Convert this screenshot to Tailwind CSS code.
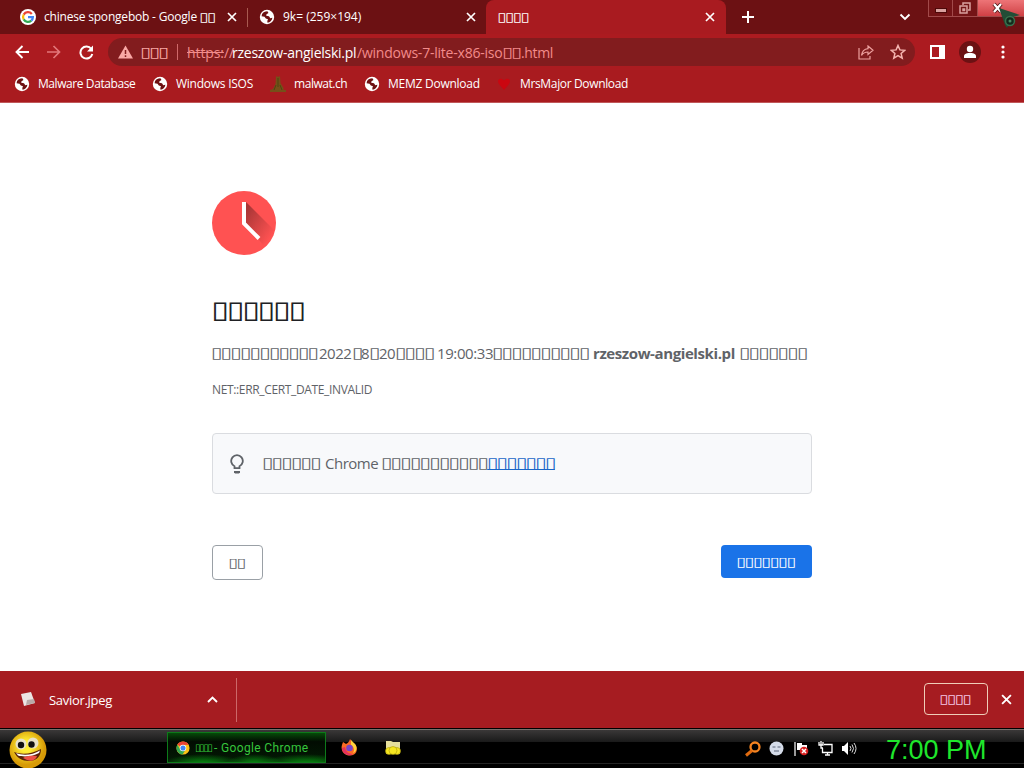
<!DOCTYPE html>
<html lang="zh">

<head>
    <meta charset="UTF-8">
    <meta name="viewport" content="width=device-width, initial-scale=1.0">
    <title>▯▯▯▯ - Google Chrome</title>
    <script src="https://cdn.jsdelivr.net/npm/@tailwindcss/browser@4"></script>
    <style>
        /* missing-glyph boxes, widened */
        .box {
            font-family: 'DejaVu Sans', sans-serif;
            display: inline-block;
            white-space: nowrap;
            letter-spacing: -0.08em;
            transform: translateX(-0.8px) scaleX(1.37);
            transform-origin: left;
            text-decoration-skip-ink: none;
        }
    </style>
</head>

<body class="w-[1024px] h-[768px] overflow-hidden flex flex-col relative bg-white whitespace-nowrap font-['Open_Sans','Noto_Sans',sans-serif]">
    <svg class="hidden">
        <symbol id="globe" viewBox="0 0 16 16">
            <circle cx="8" cy="8" r="7.2" fill="#fff" />
            <path d="M3 5.2C4.2 3 6 2.3 8.400 2.300L9.500 4 7.500 5.200 7.200 6.800 10 7.300 11.300 9.300 13.400 8.700C13 11.500 11 13.400 8.500 13.800L8.300 12 9 10.300 6.800 9.500 5.500 7.700 2.600 7.300Z" fill="#6d1012" />
            <path d="M9.600 2.600 11.500 3.400 13.200 6 10.500 5.800 9 5.300 10.300 4.300Z M2.500 9 4.600 9.500 6.400 11.500 6 13.300C4 12.500 2.800 11 2.500 9Z" fill="#fff" />
        </symbol>
        <symbol id="cross" viewBox="0 0 10 10">
            <path d="M1 1 9 9M9 1 1 9" stroke="#fff" stroke-width="1.700" />
        </symbol>
        <symbol id="chrome" viewBox="0 0 16 16">
            <circle cx="8" cy="8" r="7.500" fill="#fbc116" />
            <path d="M8 8 1.500 4.250A7.500 7.500 0 0 1 14.500 4.250L8 4.500Z" fill="#ea4335" />
            <path d="M1.500 4.250A7.500 7.500 0 0 0 7.500 15.500L11 9.800 5 9.800Z" fill="#34a853" />
            <circle cx="8" cy="8" r="3.700" fill="#fff" />
            <circle cx="8" cy="8" r="2.900" fill="#4285f4" />
        </symbol>
    </svg>

    <!-- tabs -->
    <header class="h-[34px] shrink-0 flex bg-[#6c1113] text-white text-[12px]">
        <div class="w-[247px] flex items-center pl-5">
            <svg class="w-4 h-4" viewBox="0 0 16 16">
                <circle cx="8" cy="8" r="8" fill="#fff" />
                <g fill="none" stroke-width="2.200">
                    <path d="M11.800 5A4.900 4.900 0 0 0 3.700 5.600" stroke="#ea4335" />
                    <path d="M3.700 5.600A4.900 4.900 0 0 0 3.700 10.400" stroke="#fbbc05" />
                    <path d="M3.700 10.400A4.900 4.900 0 0 0 11.300 11.600" stroke="#34a853" />
                    <path d="M11.300 11.600A4.900 4.900 0 0 0 12.900 8.100H8" stroke="#4285f4" />
                </g>
            </svg>
            <span class="ml-2 w-[156px] tracking-[-0.2px]">chinese spongebob - Google</span>
            <span class="box w-[16px]">▯▯</span>
            <svg class="w-2.5 h-2.5 ml-[11px]"><use href="#cross" /></svg>
        </div>
        <div class="w-px h-[19px] mt-2 bg-[#a85a50]"></div>
        <div class="w-[238px] flex items-center pl-[11px] pr-[10px]">
            <svg class="w-4 h-4"><use href="#globe" /></svg>
            <span class="ml-2">9k= (259×194)</span>
            <svg class="w-2.5 h-2.5 ml-auto"><use href="#cross" /></svg>
        </div>
        <div class="w-[240px] flex items-center px-[11px] bg-[#a91b20] rounded-t-lg">
            <span class="box ml-px">▯▯▯▯</span>
            <svg class="w-2.5 h-2.5 ml-auto"><use href="#cross" /></svg>
        </div>
        <svg class="w-3 h-3 mt-[11px] ml-4" viewBox="0 0 12 12"><path d="M6 0V12M0 6H12" stroke="#fff" stroke-width="2" /></svg>
        <svg class="w-3 h-2 mt-[13px] ml-[145px]" viewBox="0 0 12 8"><path d="M1.500 1.500 6 6 10.500 1.500" fill="none" stroke="#fff" stroke-width="1.900" /></svg>
        <div class="ml-[17px] w-[96px] h-[17px] flex border-l border-b border-[#a24a4a]">
            <div class="w-[24px] border-r border-[#a24a4a] flex justify-center items-center bg-[#741416]">
                <div class="w-[12px] h-[5px] mt-1 bg-[#d9a09e] border border-[#4d0909]"></div>
            </div>
            <div class="w-[25px] border-r border-[#a24a4a] flex justify-center items-center bg-[#741416]">
                <svg class="w-3 h-3" viewBox="0 0 12 12" fill="none" stroke="#d9a09e" stroke-width="1.500"><path d="M4 3V1H11V8H9" /><path d="M1 4H8V11H1ZM4 7H5.500V8.500H4Z" /></svg>
            </div>
            <div class="flex-1 flex items-center pl-[14px] bg-linear-to-b from-[#ed7477] to-[#cf3f45]">
                <svg class="w-3 h-3" viewBox="0 0 12 12"><path d="M2 2 9 10M9 2 2 10" stroke="#521515" stroke-width="4" /><path d="M2 2 9 10M9 2 2 10" stroke="#fff" stroke-width="2.300" /></svg>
            </div>
        </div>
    </header>

    <!-- toolbar -->
    <div class="h-9 shrink-0 flex items-center bg-[#ac1b20] pl-[15px]">
        <svg class="w-[14px] h-[14px]" viewBox="0 0 14 14" fill="none" stroke="#fff" stroke-width="1.900"><path d="M14 7H1.500M7.500 1 1.500 7 7.500 13" /></svg>
        <svg class="w-[14px] h-[14px] ml-[18px]" viewBox="0 0 14 14" fill="none" stroke="#e2777a" stroke-width="1.700"><path d="M0 7H12.500M6.500 1 12.500 7 6.500 13" /></svg>
        <svg class="w-[15px] h-[15px] ml-[18px]" viewBox="0 0 15 15"><path d="M12.300 4A6 6 0 1 0 13.300 9" fill="none" stroke="#fff" stroke-width="2" /><path d="M14 .5V6.500H8Z" fill="#fff" /></svg>
        <div class="ml-[14px] w-[807px] h-7 rounded-full bg-[#821c1e] flex items-center pl-[10px] text-[14px] text-[#f28b8b]">
            <svg class="w-[15px] h-[14px]" viewBox="0 0 15 14"><path d="M7.500 .5 15 13.500H0Z" fill="#f9a8a5" /><path d="M7.500 5V9M7.500 10.300V12" stroke="#821c1e" stroke-width="1.500" /></svg>
            <span class="box ml-2 w-[28px] text-[#f9a8a5]">▯▯▯</span>
            <div class="w-px h-4 ml-2 bg-[#d0696a]"></div>
            <span class="ml-[9px] w-[45px] tracking-[-0.1px]"><s>https:</s>//</span>
            <span class="w-[125px] text-white tracking-[-0.25px]">rzeszow-angielski.pl</span>
            <span class="w-[146px] tracking-[-0.22px]">/windows-7-lite-x86-iso</span>
            <span class="box w-[18px]">▯▯</span>
            <span class="tracking-[-0.35px]">.html</span>
            <svg class="w-4 h-[15px] ml-auto" viewBox="0 0 16 15" fill="none" stroke="#eda09e" stroke-width="1.200"><path d="M1 3V14H12V11" /><path d="M10 1 15 5.300 10 9.500V7C7 7 5 8 3.500 10.300 4 6.500 6.500 4 10 3.600Z" /></svg>
            <svg class="w-4 h-4 ml-4 mr-[9px]" viewBox="0 0 16 16"><path d="M8 1.500 9.900 5.900 14.700 6.300 11.100 9.500 12.200 14.200 8 11.700 3.800 14.200 4.900 9.500 1.300 6.300 6.100 5.900Z" fill="none" stroke="#f5b5b0" stroke-width="1.500" /></svg>
        </div>
        <svg class="w-[15px] h-[14px] ml-[15px]" viewBox="0 0 15 14"><path d="M1 1H14V13H1Z" fill="none" stroke="#fff" stroke-width="2" /><path d="M9 1H14V13H9Z" fill="#fff" /></svg>
        <svg class="w-[22px] h-[22px] ml-[14px]" viewBox="0 0 22 22"><circle cx="11" cy="11" r="11" fill="#6c1113" /><circle cx="11" cy="8" r="3.200" fill="#fff" /><path d="M5 17V15C5 12.500 9 12 11 12S17 12.500 17 15V17Z" fill="#fff" /></svg>
        <svg class="w-1 h-[14px] ml-5" viewBox="0 0 4 14" fill="#fff"><circle cx="2" cy="2" r="1.600" /><circle cx="2" cy="7" r="1.600" /><circle cx="2" cy="12" r="1.600" /></svg>
    </div>

    <!-- bookmarks -->
    <nav class="h-[33px] shrink-0 flex items-center bg-[#a91b1f] border-b border-[#c0585a] pb-1 pl-[14px] text-white text-[12px] tracking-[-0.25px]">
        <div class="w-[138px] flex items-center gap-2 tracking-[-0.42px]"><svg class="w-4 h-4"><use href="#globe" /></svg>Malware Database</div>
        <div class="w-[118px] flex items-center gap-2"><svg class="w-4 h-4"><use href="#globe" /></svg>Windows ISOS</div>
        <div class="w-[94px] flex items-center gap-2 tracking-[-0.45px]"><svg class="w-4 h-4" viewBox="0 0 16 16"><path d="M6 0 8 1 10 0 10.500 7 13.500 12V14H16V16H0V14L3 13 5.500 8Z" fill="#755019" /><path d="M8 2V11M6 9 4 14M10 9 12 14" stroke="#4e4510" /></svg>malwat.ch</div>
        <div class="w-[132px] flex items-center gap-2"><svg class="w-4 h-4"><use href="#globe" /></svg>MEMZ Download</div>
        <div class="flex items-center gap-2 tracking-[-0.35px]"><svg class="w-4 h-4" viewBox="0 0 16 16"><path d="M8 14 3 8C0 3 5 1 8 4.500 11 1 16 3 13 8Z" fill="#cb0610" /></svg>MrsMajor Download</div>
    </nav>

    <!-- certificate warning -->
    <main class="h-[568px] shrink-0 w-[600px] ml-[212px] pt-[88px] text-[#5f6368] flex flex-col items-start">
        <svg class="w-16 h-16" viewBox="0 0 64 64">
            <defs><linearGradient id="shade" x1="0" y1="0" x2="1" y2="1"><stop offset=".1" stop-color="#a93636" /><stop offset=".85" stop-color="#ff5252" /></linearGradient></defs>
            <circle cx="32" cy="32" r="32" fill="#ff5252" />
            <path d="M34 11 62 39C60 46 56 51 51 54L34 32Z" fill="url(#shade)" />
            <path d="M32 11V32.500L47 47.500" fill="none" stroke="#fff" stroke-width="4" />
        </svg>
        <h1 class="box mt-[37px] h-9 leading-9 text-[24px] text-[#202124]">▯▯▯▯▯▯</h1>
        <p class="mt-[13px] h-6 leading-6 text-[15px] flex tracking-[-0.3px]">
            <span class="box w-[107px]">▯▯▯▯▯▯▯▯▯▯▯</span><span class="w-[34px] tracking-[-0.5px]">2022</span><span class="box w-[8px]">▯</span><span class="w-[9px]">8</span><span class="box w-[9px]">▯</span><span class="w-[17px] tracking-[-0.5px]">20</span><span class="box w-[41px]">▯▯▯▯</span><span class="w-[56px] tracking-[-0.4px]">19:00:33</span><span class="box w-[100px]">▯▯▯▯▯▯▯▯▯▯</span><b class="w-[147px] tracking-[-0.4px]">rzeszow-angielski.pl</b><span class="box">▯▯▯▯▯▯▯</span>
        </p>
        <p class="mt-[15px] h-5 leading-5 text-[12px] tracking-[-0.35px]">NET::ERR_CERT_DATE_INVALID</p>
        <div class="mt-[33px] w-full h-[61px] border border-[#dadce0] rounded bg-[#f8f9fb] flex items-center pl-[17px] text-[15px]">
            <svg class="w-[14px] h-5" viewBox="0 0 14 20"><path d="M4.500 14.200V12.200A5.800 5.800 0 1 1 9.500 12.200V14.200Z" fill="none" stroke="#5f6368" stroke-width="1.800" /><path d="M4 17H10V18.200L9 19.500H5L4 18.200Z" fill="#5f6368" /></svg>
            <span class="box ml-[19px] w-[62px]">▯▯▯▯▯▯</span>
            <span class="w-[57px] tracking-[-0.5px]">Chrome</span>
            <span class="box w-[106px]">▯▯▯▯▯▯▯▯▯▯▯</span>
            <a href="#" class="box text-[#1a66c8] underline">▯▯▯▯▯▯▯</a>
        </div>
        <div class="mt-[51px] w-full flex justify-between items-start text-[13px]">
            <button class="w-[51px] h-[35px] border border-[#9aa0a6] rounded pl-4 text-left"><span class="box">▯▯</span></button>
            <button class="w-[91px] h-[33px] rounded bg-[#1a73e8] text-white pl-4 text-left"><span class="box">▯▯▯▯▯▯▯</span></button>
        </div>
    </main>

    <!-- downloads -->
    <div class="h-[57px] shrink-0 bg-[#a61c21] flex items-center text-white text-[13px]">
        <div class="w-[237px] h-[44px] border-r border-[#cc6868] flex items-center pl-[21px] pr-[18px]">
            <svg class="w-[15px] h-[15px]" viewBox="0 0 15 15"><path d="M0 2 10 0 14 11 3 14Z" fill="#ece5e4" /><path d="M6 8 13 7 14 11 5 13Z" fill="#b9aaa8" /></svg>
            <span class="ml-[13px] pt-0.5 tracking-[-0.3px]">Savior.jpeg</span>
            <svg class="w-[11px] h-[7px] ml-auto" viewBox="0 0 11 7"><path d="M1 6 5.500 1.500 10 6" fill="none" stroke="#fff" stroke-width="1.900" /></svg>
        </div>
        <div class="ml-auto mb-[2px] w-16 h-8 border border-[#f0cdb8] rounded flex items-center pl-[15px] text-[12px]"><span class="box text-[#f5c6e6]">▯▯▯▯</span></div>
        <svg class="w-[11px] h-[11px] ml-[13px] mr-[12px]"><use href="#cross" /></svg>
    </div>

    <!-- taskbar -->
    <footer class="h-10 shrink-0 bg-black flex flex-col font-['Roboto','Liberation_Sans',sans-serif]">
        <div class="h-px shrink-0 mt-px bg-[#77706c]"></div>
        <div class="h-[34px] shrink-0 flex items-center pt-0.5 border-b border-[#252525] bg-linear-to-b from-[#3a3838] from-0% via-[#1b1b1b] via-35% to-black to-36%">
            <svg class="w-[38px] h-[38px] ml-[9px] -mb-1 relative shrink-0" viewBox="0 0 38 38">
                <defs><radialGradient id="face" cx=".45" cy=".4"><stop offset=".3" stop-color="#ffee35" /><stop offset="1" stop-color="#d79a06" /></radialGradient></defs>
                <circle cx="19" cy="19" r="18.500" fill="url(#face)" />
                <circle cx="12" cy="13" r="5.500" fill="#e8e2c8" /><circle cx="24" cy="12" r="5.500" fill="#e8e2c8" />
                <circle cx="12" cy="14" r="3.200" fill="#111" /><circle cx="22.500" cy="13.500" r="3.200" fill="#111" />
                <path d="M5 21C13 24 23 23 32 18 32 26 27 30 20 30 13 30 8 27 5 21Z" fill="#5a2205" />
                <path d="M7 22C14 25 24 24 31 19.500L30 22C23 26 14 26 9 24.500Z" fill="#fff" />
                <path d="M14 27C19 24 24 25 28 25 27 29 22 31 18 29Z" fill="#ed5145" />
            </svg>
            <div class="ml-[120px] w-[159px] h-[31px] border border-[#0d7a1a] flex items-center pl-[8px] text-[12px] text-[#36c53c] bg-[radial-gradient(ellipse_at_22%_110%,#08a312_0%,transparent_24%),radial-gradient(ellipse_at_55%_110%,#08a312_0%,transparent_24%),radial-gradient(ellipse_at_88%_110%,#08a312_0%,transparent_24%),linear-gradient(#064b09,#020c02_30%,#031a04)]">
                <svg class="w-[14px] h-[14px]"><use href="#chrome" /></svg>
                <span class="ml-[5px] w-[19px] text-[10px] tracking-[-1.4px] font-['DejaVu_Sans']">▯▯▯▯</span>
                <span class="tracking-[0.35px]">- Google Chrome</span>
            </div>
            <svg class="w-[17px] h-[17px] ml-[15px]" viewBox="0 0 17 17"><path d="M2 3 5 5C7 4 8 3 9 0L12 4C17 6 17 13 13 15.500 9 18 2 16 1 11 0 8 1 6 2 3Z" fill="#fb6a26" /><path d="M10 1 13 4C17 7 16 13 12 14 14 11 13 8 10 6Z" fill="#ffd23a" /><path d="M1 9C1 15 8 18 12 15 8 15 5 13 4 8Z" fill="#e5305f" /><circle cx="8.500" cy="9" r="3.300" fill="#7545c9" /></svg>
            <svg class="w-4 h-4 ml-[27px]" viewBox="0 0 16 16"><path d="M1 1H6L8 2H15V14H1Z" fill="#e6df9c" /><g fill="#f6e621" stroke="#a99908" stroke-width=".600"><circle cx="4" cy="11" r="3.500" /><circle cx="12" cy="11" r="3.500" /><circle cx="8" cy="10.500" r="4" /></g></svg>
            <div class="ml-auto flex items-center">
                <svg class="w-4 h-4 mt-0.5" viewBox="0 0 16 16" fill="none"><circle cx="10" cy="6" r="4.500" stroke="#f58320" stroke-width="2.300" /><path d="M7 9.500 1 14.500" stroke="#e06b10" stroke-width="3" /></svg>
                <svg class="w-[15px] h-[15px] mt-0.5 ml-2" viewBox="0 0 15 15"><circle cx="7.500" cy="7.500" r="7" fill="#d5dce9" /><path d="M3.500 6H6.500M8.500 6H11.500M5 10H10" stroke="#5b6578" /></svg>
                <svg class="w-[15px] h-[15px] mt-0.5 ml-[10px]" viewBox="0 0 15 15"><path d="M1 1V15" stroke="#fff" stroke-width="1.200" /><path d="M3 2H8V4H13V9H3Z" fill="#fff" /><circle cx="10" cy="10" r="4.300" fill="#d82020" /><path d="M8 8 12 12M12 8 8 12" stroke="#fff" stroke-width="1.500" /></svg>
                <svg class="w-[15px] h-[15px] mt-0.5 ml-[9px]" viewBox="0 0 15 15" fill="none" stroke="#fff" stroke-width="1.300"><path d="M6 3.500H14V11.500H4.500V7M7 14H12M9.500 12V14M1 1V4H5V1M3 0V7H5" /></svg>
                <svg class="w-[16px] h-[15px] mt-0.5 ml-2" viewBox="0 0 16 15"><path d="M1 5H3L7 1V14L3 10H1Z" fill="#fff" /><path d="M9 5Q11 7.500 9 10M11 3.500Q14 7.500 11 11.500M13 2Q17 7.500 13 13" fill="none" stroke="#ddd" /></svg>
                <span class="ml-[29px] mr-[37px] mt-1 w-[101px] text-[27px] leading-[30px] text-[#1fe62c] font-['Liberation_Sans',sans-serif]">7:00 PM</span>
            </div>
        </div>
    </footer>

    <!-- mouse pointer -->
    <svg class="absolute left-[999px] top-2 w-[25px] h-[22px]" viewBox="0 0 25 22"><path d="M0 0 21 7 14 9 8 20 6 17Z" fill="#234d36" /><circle cx="11" cy="13" r="4.500" fill="#132b1d" stroke="#39724e" stroke-width="1.500" /><circle cx="11" cy="13" r="1.500" fill="#4a8a61" /></svg>
</body>

</html>
